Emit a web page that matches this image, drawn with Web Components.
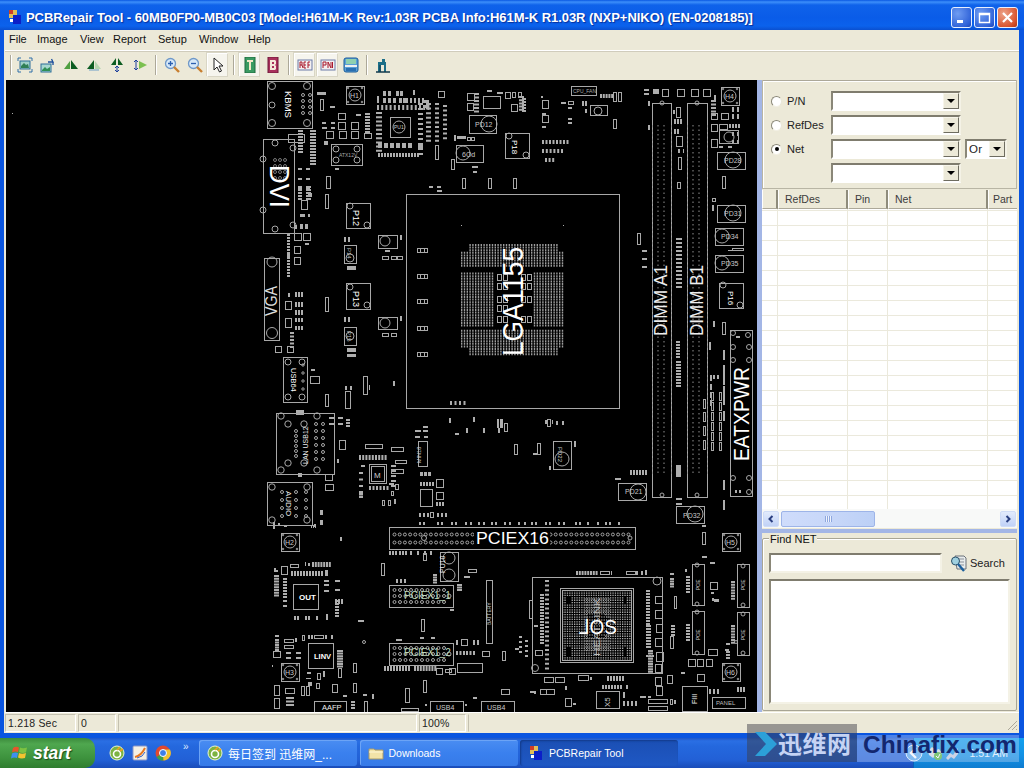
<!doctype html>
<html>
<head>
<meta charset="utf-8">
<title>PCBRepair Tool</title>
<style>
  html, body { margin: 0; height: 100%; overflow: hidden; background: #0a55e0; }
  body { width: 1024px; height: 768px; position: relative; font-family: "Liberation Sans", Arial, sans-serif; }
</style>
</head>
<body>
<xp-window>
  <title-bar slot="title">PCBRepair Tool - 60MB0FP0-MB0C03 [Model:H61M-K Rev:1.03R PCBA Info:H61M-K R1.03R (NXP+NIKO) (EN-0208185)]</title-bar>
  <menu-bar slot="menu"></menu-bar>
  <tool-bar slot="tools"></tool-bar>
  <pcb-view slot="view"></pcb-view>
  <side-panel slot="side"></side-panel>
  <status-strip slot="status"></status-strip>
</xp-window>
<task-bar></task-bar>
<china-mark></china-mark>

<script>
const BASE_FONT = '"Liberation Sans", "DejaVu Sans", Arial, sans-serif';

// small helper, every element is just css + markup in an open shadow root
function define(name, css, html) {
  customElements.define(name, class extends HTMLElement {
    constructor() {
      super();
      this.attachShadow({ mode: 'open' });
      const markup = typeof html === 'function' ? html(this) : html;
      this.shadowRoot.innerHTML = `<style>${css}</style>${markup}`;
    }
  });
}

define('xp-window', `
  :host { display: flex; flex-direction: column; height: 738px; box-sizing: border-box;
    background: #0a55e0; padding: 0 5px 5px 4px; }
  .title { display: block; margin: 0 -5px 0 -4px; }
  .body { background: #ece9d8; flex: 1; display: flex; flex-direction: column; min-height: 0; padding-left: 1px; }
  .main { display: flex; height: 632px; padding-left: 1px; }
  .split { width: 5px; background: #a3b6e6; }
`, `
  <div class="title"><slot name="title"></slot></div>
  <div class="body">
    <slot name="menu"></slot>
    <slot name="tools"></slot>
    <div class="main"><slot name="view"></slot><div class="split"></div><slot name="side"></slot></div>
    <slot name="status"></slot>
  </div>
`);

define('title-bar', `
  :host { display: flex; align-items: center; height: 30px; box-sizing: border-box; padding: 4px 6px 0 8px;
    background: linear-gradient(#0a58e2 0, #3d8ffa 2px, #0f62ea 5px, #0a5ce8 18px, #0b62ec 26px, #0a50d0 30px);
    color: #fff; font: bold 13px ${BASE_FONT}; text-shadow: 1px 1px 1px #08309a; }
  .ico { width: 14px; height: 14px; margin-right: 4px; flex: none; }
  .txt { flex: 1; white-space: nowrap; letter-spacing: -.05px; }
  .btns { display: flex; gap: 2px; }
  .b { width: 21px; height: 21px; box-sizing: border-box; border: 1px solid #e8f0ff; border-radius: 3px;
    background: radial-gradient(circle at 30% 30%, #6f9cf2, #2f62d8 75%, #1c46b8); display: flex; align-items: center; justify-content: center; }
  .b.x { background: radial-gradient(circle at 30% 30%, #eda48a, #d9552f 70%, #b03310); }
`, `
  <svg class="ico" viewBox="0 0 14 14"><rect x="1" y="0" width="8" height="8" fill="#e2bd57"/><rect x="1" y="0" width="4" height="4" fill="#cf3c28"/><rect x="5" y="5" width="8" height="9" fill="#0b1fc8"/><rect x="2" y="9" width="3" height="3" fill="#fff"/></svg>
  <div class="txt"><slot></slot></div>
  <div class="btns">
    <div class="b"><svg width="13" height="13" viewBox="0 0 13 13"><rect x="2" y="9" width="6" height="3" fill="#fff"/></svg></div>
    <div class="b"><svg width="13" height="13" viewBox="0 0 13 13"><path d="M1.5 2.5h10v9h-10z M1.5 3.5h10" fill="none" stroke="#fff" stroke-width="1.4"/></svg></div>
    <div class="b x"><svg width="13" height="13" viewBox="0 0 13 13"><path d="M2 2l9 9M11 2l-9 9" stroke="#fff" stroke-width="2.2"/></svg></div>
  </div>
`);

define('menu-bar', `
  :host { display: flex; height: 21px; align-items: center; box-sizing: border-box; padding: 0 0 2px 4px;
    color: #111; font: 11px ${BASE_FONT}; border-bottom: 1px solid #fff; }
  span { white-space: nowrap; }
`, [['File', 28], ['Image', 43], ['View', 33], ['Report', 45], ['Setup', 41], ['Window', 49], ['Help', 30]]
  .map(m => `<span style="width:${m[1]}px">${m[0]}</span>`).join(''));

const ICONS = {
  fit: '<rect x="3" y="4" width="10" height="8" fill="#9fd0c8" stroke="#2d6f98"/><path d="M4 9l3-3 2 2 2-1 1 4H4z" fill="#2f7f55"/><path d="M1 4V1h3M12 1h3v3M15 12v3h-3M4 15H1v-3" fill="none" stroke="#2f6fa8"/>',
  rot: '<rect x="1" y="7" width="10" height="8" fill="#a8d8d0" stroke="#2d6f98"/><path d="M2 13l3-3 2 2 3-2v4H2z" fill="#2f8f55"/><path d="M8 5h5l-1.5-3M13 5v3" fill="none" stroke="#1c4f9c" stroke-width="1.3"/>',
  mL: '<path d="M1 12l6-8v8z" fill="#4f9f40"/><path d="M8 12V3l7 9z" fill="#0d5d22"/>',
  mR: '<path d="M1 12l7-9v9z" fill="#0d5d22"/><path d="M9 12V4l6 8z" fill="#b7d6b0"/><path d="M3 13h10" stroke="#6fa0c8"/>',
  mV: '<path d="M2 8l5-7v7zM9 8V1l5 7z" fill="#0d5d22"/><path d="M8 9v6M6 11l2-2 2 2M6 13l2 2 2-2" fill="none" stroke="#1c3f9c"/>',
  mH: '<path d="M7 4l8 4-8 4z" fill="#7cc050"/><path d="M4 3v10M2 5l2-2 2 2M2 11l2 2 2-2" fill="none" stroke="#1c3f9c"/>',
  zin: '<circle cx="6.5" cy="6.5" r="5" fill="#d6e8f8" stroke="#6f98c8" stroke-width="1.3"/><path d="M4 6.5h5M6.5 4v5" stroke="#2b5fb0" stroke-width="1.3"/><path d="M10 10l5 5" stroke="#c87f30" stroke-width="2.4"/>',
  zout: '<circle cx="6.5" cy="6.5" r="5" fill="#d6e8f8" stroke="#6f98c8" stroke-width="1.3"/><path d="M4 6.5h5" stroke="#2b5fb0" stroke-width="1.3"/><path d="M10 10l5 5" stroke="#c87f30" stroke-width="2.4"/>',
  arrow: '<path d="M4 1v12l3-3 2.5 5 2-1-2.5-5h4z" fill="#fff" stroke="#222"/>',
  top: '<rect x="3" y="0" width="10" height="16" fill="#3a9a62" stroke="#1e6a3e"/><path d="M5 3h6v2H9v8H7V5H5z" fill="#f4e8c8"/>',
  bot: '<rect x="3" y="0" width="10" height="16" fill="#a8305c" stroke="#6e1838"/><path d="M5 3h5l1 1v3l-1 1 1 1v3l-1 1H5zM7 5v2h2V5zM7 9v2h2V9z" fill="#f4e8d8" fill-rule="evenodd"/>',
  ref: '<rect x="1" y="3" width="14" height="10" fill="#f4f0f0" stroke="#6c7ca8"/><path d="M3 5v6M3 5h2v3H3M5 8l1 3M7 5v6M7 5h2M7 8h2M7 11h2M11 5v6M11 5h2M11 8h2" fill="none" stroke="#a8182c"/>',
  pn: '<rect x="1" y="3" width="14" height="10" fill="#f4f0f0" stroke="#6c7ca8"/><path d="M3 11V5h3v3H3M8 11V5l3 6V5M12.5 11V5" fill="none" stroke="#a8182c"/>',
  disk: '<rect x="1" y="1" width="14" height="14" rx="2" fill="#5a9fd8" stroke="#1c5c98"/><rect x="3" y="2" width="10" height="5" fill="#8fd0b0"/><rect x="2" y="8" width="12" height="2" fill="#f0f0f0"/><rect x="3" y="11" width="10" height="3" fill="#2a6fb0"/>',
  house: '<path d="M3 15V5h4V2h3v3h1v10H9V8H6v7z" fill="#1c6f88"/><path d="M1 15h14" stroke="#12384c" stroke-width="1.5"/><path d="M5 8v7" stroke="#12384c"/>'
};

define('tool-button', `
  :host { display: block; }
  div { width: 21px; height: 24px; box-sizing: border-box; display: flex; align-items: center; justify-content: center; border: 1px solid transparent; }
  :host([down]) div { background: #f6f5ee; border-color: #fff #d9d6c5 #d9d6c5 #fff; box-shadow: -1px -1px 0 #d9d6c5; }
  svg { width: 16px; height: 16px; }
`, el => `<div><svg viewBox="0 0 16 16">${ICONS[el.getAttribute('icon')]}</svg></div>`);

define('tool-bar', `
  :host { display: flex; align-items: center; height: 29px; box-sizing: border-box; padding: 0 0 2px 5px; gap: 2px; border-top: 1px solid #d0ccbc; }
  i { width: 1px; height: 20px; background: #aca899; border-right: 1px solid #fff; margin: 0 2.5px; flex: none; }
  i.first { margin: 0; }
`, `
  <i class="first"></i>
  <tool-button icon="fit"></tool-button><tool-button icon="rot"></tool-button><tool-button icon="mL"></tool-button><tool-button icon="mR"></tool-button><tool-button icon="mV"></tool-button><tool-button icon="mH"></tool-button>
  <i></i>
  <tool-button icon="zin"></tool-button><tool-button icon="zout"></tool-button><tool-button icon="arrow" down></tool-button>
  <i></i>
  <tool-button icon="top" down></tool-button><tool-button icon="bot"></tool-button>
  <i></i>
  <tool-button icon="ref" down></tool-button><tool-button icon="pn" down></tool-button><tool-button icon="disk"></tool-button>
  <i></i>
  <tool-button icon="house"></tool-button>
`);

// ---- board drawing, coordinates are the ones seen on screen
function drawBoard() {
  const out = [];
  const G = '#a8a8a8';
  let pads = '';
  const r = (x, y, w, h, s = G) => out.push(`<rect x="${x}.5" y="${y}.5" width="${w}" height="${h}" fill="none" stroke="${s}"/>`);
  const f = (x, y, w, h) => { pads += `M${x} ${y}h${w}v${h}h${-w}z`; };
  const c = (x, y, rad, s = G) => out.push(`<circle cx="${x}" cy="${y}" r="${rad}" fill="none" stroke="${s}"/>`);
  const row = (x, y, n, w, h, dx) => { for (let i = 0; i < n; i++) f(x + i * dx, y, w, h); };
  const col = (x, y, n, w, h, dy) => { for (let i = 0; i < n; i++) f(x, y + i * dy, w, h); };
  const t = (s, x, y, size, rot = 0, fill = '#f4f4f4', len = 0, weight = 'normal') => out.push(
    `<text transform="translate(${x} ${y}) rotate(${rot})" font-size="${size}" fill="${fill}" font-weight="${weight}"${len ? ` textLength="${len}" lengthAdjust="spacingAndGlyphs"` : ''}>${s}</text>`);
  const box4 = (x, y, w, h, rad = 3) => { r(x, y, w, h); c(x + 5, y + 5, rad); c(x + w - 5, y + 5, rad); c(x + 5, y + h - 5, rad); c(x + w - 5, y + h - 5, rad); };
  const pd = (x, y, w, h, cx, cy, rad, label, lx, ly, rot = 0) => { r(x, y, w, h); c(cx, cy, rad); t(label, lx, ly, 7, rot, '#c8c8c8'); };
  const hole = (x, y, label) => { r(x, y, 18, 18); c(x + 9, y + 9, 6); [[2,2],[16,2],[2,16],[16,16]].forEach(p => c(x + p[0], y + p[1], .8)); t(label, x + 4, y + 12, 7, 0, '#c8c8c8'); };

  f(12, 113, 1, 1);

  // rear connectors
  box4(267, 81, 45, 47, 3.5); c(272, 105, 3);
  [95, 101, 107, 113].forEach(y => { c(303, y, 1.5); c(310, y, 1.5); });
  t('KBMS', 285, 91, 9.5, 90, '#fff');
  r(263, 139, 31, 94);
  [[275,143],[263,159],[263,210],[275,229],[293,148],[293,225]].forEach(p => c(p[0], p[1], 3));
  for (let i = 0; i < 4; i++) for (let j = 0; j < 3; j++) c(275 + j * 5, 160 + i * 6, 1.5, '#777');
  t('DVI', 270, 165, 27, 90, '#fff', 43);
  r(264, 258, 15, 82); c(272, 333, 5.5); c(272, 262, 5);
  t('VGA', 277, 316, 16, -90, '#ddd', 30);
  box4(283, 357, 24, 45, 3); [365, 373, 381, 389].forEach(y => { c(303, y, 1.2); });
  t('USB64', 291, 368, 7.5, 90, '#fff');
  r(276, 413, 58, 61);
  [[281,416],[317,416],[281,470],[317,470],[288,424],[304,424],[288,463],[304,463]].forEach(p => c(p[0], p[1], 3.2));
  for (let i = 0; i < 6; i++) { c(316, 424 + i * 7, 1.5); c(323, 424 + i * 7, 1.5); c(296, 431 + i * 5, 1.5); }
  t('LAN USB12', 308, 464, 7, -90, '#e8e8e8');
  f(296, 410, 8, 5); f(298, 473, 4, 4);
  box4(267, 482, 45, 43, 3.2);
  [492, 500, 508, 516].forEach(y => { c(282, y, 1.5); c(296, y, 1.5); c(306, y, 1.5); });
  t('AUDIO', 286, 491, 8, 90, '#eee');
  hole(281, 533, 'H2'); hole(281, 663, 'H3'); hole(346, 86, 'H1'); hole(721, 87, 'H4'); hole(722, 533, 'H5'); hole(722, 663, 'H6');

  // pads left of the socket
  col(298, 130, 8, 5, 2, 3); col(310, 130, 12, 6, 2, 3);
  [168, 178, 187].forEach(y => { f(298, y, 4, 2); f(306, y, 4, 2); });
  col(298, 186, 5, 4, 2, 3); col(306, 186, 5, 5, 2, 3);
  r(288, 134, 16, 8); f(308, 193, 4, 4);
  r(301, 200, 6, 9); f(300, 214, 5, 3); f(308, 214, 2, 3); f(295, 225, 2, 4); f(300, 224, 3, 5); f(305, 224, 3, 5);
  r(294, 233, 7, 7); r(303, 233, 7, 7); r(294, 246, 6, 7); r(294, 257, 6, 7);
  col(287, 234, 8, 3, 2, 3); col(287, 254, 8, 3, 2, 3); f(305, 243, 4, 2);
  r(326, 176, 4, 12);
  r(325, 297, 3, 14); r(325, 194, 3, 14);
  f(317, 92, 9, 3); r(320, 99, 3, 11); f(330, 106, 5, 2); f(324, 141, 4, 4);
  f(322, 122, 4, 2); f(331, 122, 4, 2); f(322, 127, 5, 2); f(331, 127, 4, 2);
  r(338, 113, 7, 6); r(338, 122, 7, 7); r(326, 131, 7, 7); r(339, 131, 7, 7); r(351, 131, 7, 7); r(351, 122, 7, 7); r(364, 133, 7, 5);
  col(365, 113, 7, 5, 2, 3); f(356, 114, 5, 2);
  box4(331, 144, 31, 21, 3); t('ATX12V', 339, 157, 5, 0, '#aaa'); f(335, 168, 4, 2);
  f(344, 237, 2, 5); f(348, 237, 2, 5);
  r(378, 235, 19, 13); c(385, 241, 5); f(400, 235, 2, 5); f(385, 250, 5, 2); r(382, 256, 6, 3); r(391, 256, 5, 3); r(397, 256, 5, 3);
  r(344, 245, 12, 18); c(350, 258, 4); t('P14', 347, 248, 6, 90, '#ccc');
  row(347, 266, 3, 3, 4, 3);
  r(346, 203, 24, 25); c(350, 206, 3); c(367, 225, 3); t('P12', 353, 210, 9, 90, '#fff');
  r(346, 283, 24, 26); c(350, 287, 3); c(367, 305, 3); t('P13', 353, 291, 9, 90, '#fff');
  r(378, 317, 19, 12); c(385, 323, 5); f(400, 316, 2, 5); r(382, 333, 6, 3); r(391, 333, 5, 3);
  f(344, 317, 2, 5); f(348, 317, 2, 5);
  r(344, 327, 12, 18); c(350, 336, 4); t('P15', 347, 331, 6, 90, '#ccc');
  row(347, 348, 3, 3, 4, 3); row(347, 354, 3, 3, 3, 3);
  [248, 274, 299, 326, 352].forEach(y => { r(417, y, 10, 4); f(420, y, 1, 5); f(424, y, 1, 5); });

  // VR block around PU1
  r(390, 117, 20, 20); c(399, 127, 6); t('PU1', 394, 129, 5, 0, '#ccc');
  row(383, 91, 2, 3, 5, 5); row(396, 91, 2, 3, 5, 4); f(413, 90, 2, 5);
  row(383, 98, 3, 3, 5, 5); row(399, 98, 2, 3, 5, 4); row(406, 98, 5, 2, 5, 4); f(377, 96, 2, 7);
  row(377, 105, 13, 2, 5, 4.2); f(423, 100, 6, 3); f(423, 105, 5, 3);
  col(376, 112, 10, 6, 2, 4.2); col(418, 103, 11, 5, 2, 5); col(426, 103, 9, 5, 2, 4.6); col(435, 103, 9, 4, 2, 4.6); col(443, 105, 8, 4, 2, 4.6);
  row(378, 143, 6, 4, 5, 6); f(418, 145, 5, 4);
  row(378, 153, 14, 2, 4, 3);
  r(435, 145, 3, 14); r(451, 159, 3, 10); f(454, 135, 2, 6);
  r(438, 91, 6, 6); r(467, 93, 7, 7); r(467, 103, 6, 7); col(474, 93, 6, 5, 2, 3.5);
  r(483, 96, 17, 12); f(487, 90, 5, 2); f(497, 92, 6, 2); r(505, 92, 5, 6);
  pd(469, 115, 27, 18, 489, 124, 8, 'PD12', 475, 127);
  f(457, 136, 9, 3); r(467, 137, 3, 3); r(471, 137, 3, 3);
  pd(456, 145, 27, 17, 463, 153, 7, '6Od', 462, 157);
  f(472, 166, 6, 2); f(473, 171, 4, 2);
  r(462, 178, 3, 10); r(488, 178, 3, 10); f(429, 186, 4, 2); f(437, 186, 4, 2); f(437, 190, 5, 2);

  // top centre
  r(571, 86, 25, 9); t('CPU_FAN', 573, 93, 5, 0, '#aaa');
  row(600, 94, 5, 2, 4, 2.8); r(613, 92, 3, 9); r(618, 92, 3, 9);
  r(512, 92, 3, 5); r(518, 92, 3, 5); col(519, 96, 5, 5, 2, 3.2); r(511, 104, 6, 7); col(522, 98, 5, 4, 2, 3);
  f(541, 96, 2, 2); r(542, 100, 6, 8); f(542, 113, 4, 2); r(542, 115, 6, 7); f(542, 126, 4, 2);
  f(561, 102, 5, 2); r(568, 101, 5, 3); f(568, 107, 4, 2); f(582, 101, 2, 5); f(585, 101, 2, 5); f(585, 109, 2, 4);
  r(590, 105, 17, 10); c(598, 111, 4); f(568, 118, 4, 2); f(568, 122, 4, 2);
  r(613, 119, 3, 9);
  r(505, 133, 24, 25); c(509, 136, 3); c(526, 155, 3); t('P18', 512, 140, 8, 90, '#fff');
  row(542, 140, 8, 2, 4, 3.5); row(542, 149, 6, 2, 4, 3.8); row(545, 158, 3, 2, 4, 3.6);
  r(513, 178, 3, 10);
  r(637, 233, 3, 11); col(642, 250, 3, 5, 2, 8);

  // socket
  r(406, 194, 213, 214);
  f(461, 225, 1, 1); f(563, 225, 1, 1);
  let lga = '';
  for (let x = 461; x < 564; x += 2.8) for (let y = 244; y < 354; y += 2.6) {
    const inHole = x > 492 && x < 533 && y > 270 && y < 327;
    const gap = (y > 266 && y < 271) || (y > 325 && y < 329);
    const corner = (x < 467 && (y < 250 || y > 346)) || (x > 558 && (y < 250 || y > 346));
    if (!inHole && !gap && !corner) lga += `M${x.toFixed(1)} ${y.toFixed(1)}h1.4v2h-1.4z`;
  }
  out.push(`<path d="${lga}" fill="#9c9c9c"/>`);
  [[497,274],[503,274],[497,283],[503,283],[521,274],[527,274],[521,283],[527,283],[497,296],[503,296],[497,305],[503,305],[497,316],[503,316],[521,296],[527,296],[521,316],[527,316]].forEach(p => r(p[0], p[1], 4, 6));
  row(450, 401, 4, 2, 4, 4.5);
  t('LGA1155', 523, 356, 29, -90, '#fff', 109);

  // memory slots
  [[652, 19, 658, 664], [687, 20, 693, 699]].forEach(m => {
    r(m[0], 103, m[1], 394);
    c(m[0] + 10, 103, 2); c(m[0] + 10, 495, 2);
    let d = '';
    for (let y = 125; y < 472; y += 4.5) d += `M${m[2]} ${y}v1.5M${m[3]} ${y}v1.5M${m[0] + .5} ${y}v2.5M${m[0] + m[1] + .5} ${y}v2.5`;
    out.push(`<path d="${d}" stroke="#909090" fill="none"/>`);
  });
  t('DIMM A1', 667, 336, 18, -90, '#eee', 71);
  t('DIMM B1', 703, 336, 18, -90, '#eee', 71);
  f(644, 89, 5, 2); f(644, 93, 5, 2); f(653, 89, 6, 5); r(662, 89, 6, 7); r(677, 89, 7, 7); r(691, 89, 7, 7); r(703, 89, 7, 7); f(714, 95, 2, 5);
  f(648, 101, 2, 5); f(648, 125, 2, 5);
  r(676, 107, 4, 10); f(673, 110, 2, 4); row(674, 119, 3, 2, 5, 3); row(674, 129, 2, 2, 5, 3);
  r(676, 136, 6, 10); f(678, 149, 2, 4); f(683, 149, 1, 4); r(678, 157, 3, 12);
  r(677, 182, 3, 6);
  col(676, 238, 13, 6, 2, 4);
  col(711, 100, 5, 5, 2, 3.5); r(711, 113, 6, 6); r(721, 113, 7, 6); f(732, 107, 2, 5); f(737, 107, 2, 5); f(732, 114, 2, 5); f(737, 114, 2, 5);
  r(711, 124, 6, 7); r(719, 124, 8, 5); row(729, 124, 4, 2, 4, 3);
  r(719, 130, 19, 13); c(729, 137, 5); r(711, 139, 6, 8);
  f(732, 132, 2, 4); f(737, 132, 2, 4); f(732, 140, 2, 4); f(737, 140, 2, 4);
  row(719, 146, 2, 4, 2, 9);
  pd(717, 152, 28, 17, 733, 160, 8, 'PD28', 724, 163);
  r(722, 176, 3, 12); r(712, 198, 3, 3); f(712, 205, 2, 6);
  pd(717, 205, 28, 17, 733, 213, 8, 'PD31', 724, 216);
  pd(715, 228, 28, 17, 722, 236, 7, 'PD34', 721, 239);
  r(732, 248, 11, 2); f(728, 250, 5, 1);
  pd(715, 255, 28, 17, 722, 263, 7, 'PD35', 721, 266);
  r(719, 283, 24, 25); c(723, 285, 3); c(740, 305, 3); t('P16', 728, 291, 8, 90, '#fff');
  r(722, 322, 3, 12); f(713, 321, 2, 6); f(709, 342, 2, 8);
  col(676, 341, 6, 4, 2, 3); col(676, 361, 9, 5, 2, 3);
  [[710,375],[710,384],[710,392],[710,400]].forEach(p => { f(p[0], p[1], 2, 6); });
  [[723,350],[723,365],[723,375],[723,386],[723,395],[723,411],[723,480],[723,500]].forEach(p => f(p[0], p[1], 2, 10));
  for (let y = 392; y < 445; y += 10) { r(711, y, 2, 8); r(719, y, 2, 8); }
  [401, 414, 428, 442].forEach(y => { r(703, y - 2, 2, 9); });
  f(713, 375, 2, 4); f(717, 375, 2, 4);
  row(630, 470, 6, 2, 5, 3); f(615, 478, 6, 2);
  f(676, 465, 5, 12); f(676, 498, 6, 2); f(676, 503, 6, 2);

  r(730, 330, 22, 166);
  [[733,333],[748,335],[733,347],[749,347],[733,360],[749,360],[733,478],[749,478],[749,492]].forEach(p => c(p[0], p[1], 2.5));
  row(735, 490, 2, 2, 3, 4); f(736, 336, 4, 2);
  t('EATXPWR', 749, 461, 22, -90, '#fff', 94);

  // chips under the socket
  r(553, 441, 18, 28); c(562, 459, 7); t('PD22', 558, 447, 6, 90, '#ccc');
  f(574, 441, 2, 6); f(549, 466, 2, 4);
  pd(618, 483, 28, 17, 638, 492, 8, 'PD21', 625, 494);
  pd(676, 506, 28, 17, 695, 514, 8, 'PD32', 683, 518);
  r(514, 444, 3, 10); r(537, 443, 3, 11); f(545, 420, 2, 4); r(547, 419, 3, 7); f(552, 420, 1, 4); f(556, 421, 2, 4); f(562, 421, 2, 4);
  f(533, 453, 4, 2); r(504, 423, 3, 8);
  f(449, 418, 2, 5); f(473, 417, 2, 5); f(466, 428, 2, 5); f(483, 428, 2, 5); f(498, 428, 2, 5);
  f(497, 419, 2, 9); f(500, 419, 3, 9);
  f(455, 433, 4, 2); f(423, 430, 5, 2); f(423, 426, 5, 2); f(415, 430, 6, 2); f(415, 436, 5, 2); f(424, 436, 4, 2);
  r(418, 441, 9, 25); t('MIN18', 421, 463, 5.5, -90, '#ccc');
  row(420, 472, 3, 3, 4, 4); row(420, 482, 5, 2, 4, 3); r(436, 479, 7, 8);
  r(420, 489, 12, 17); r(436, 492, 7, 7); row(436, 502, 3, 2, 4, 3);
  r(365, 444, 17, 4); r(391, 447, 12, 4); r(395, 460, 11, 3); r(391, 469, 12, 4);
  row(359, 455, 9, 2, 5, 3.2);
  r(369, 464, 17, 19); r(371, 466, 13, 15); t('M', 374, 478, 8, 0, '#ccc');
  f(361, 465, 4, 2); col(359, 472, 4, 4, 2, 6.5);
  col(359, 491, 3, 4, 2, 2.5); row(369, 486, 6, 2, 4, 3.5); f(389, 483, 5, 2);
  col(391, 465, 5, 5, 2, 5); r(395, 484, 3, 5); r(391, 491, 2, 4); r(382, 500, 2, 5); r(388, 500, 2, 5); r(394, 499, 1, 4);
  r(339, 440, 6, 9); f(337, 459, 2, 4); r(325, 474, 7, 6); r(325, 484, 8, 6);
  f(338, 417, 5, 2); f(338, 423, 5, 2); col(346, 419, 3, 4, 2, 3);
  f(329, 417, 6, 2); f(329, 423, 6, 2);
  f(311, 369, 4, 2); r(310, 376, 9, 7); r(325, 394, 3, 12);
  f(345, 386, 2, 4); f(350, 386, 2, 4); r(345, 391, 5, 17);
  r(363, 376, 4, 18); f(369, 385, 1, 5); f(393, 381, 2, 5);
  f(288, 293, 2, 4); row(295, 292, 3, 2, 5, 3); row(295, 302, 3, 2, 5, 3); row(295, 310, 3, 2, 5, 3); row(295, 318, 3, 2, 4, 3);
  r(285, 301, 6, 8); r(285, 318, 6, 9); row(295, 326, 3, 2, 4, 3);
  col(290, 332, 5, 4, 2, 3.5); r(275, 346, 6, 6); r(287, 346, 6, 6);

  // PCIE x16
  r(389, 527, 246, 22);
  let pcie = '';
  for (let x = 393; x < 630; x += 5.2) { pcie += `M${x.toFixed(1)} 534.5a1.5 1.5 0 1 0 3 0a1.5 1.5 0 1 0 -3 0M${x.toFixed(1)} 542.5a1.5 1.5 0 1 0 3 0a1.5 1.5 0 1 0 -3 0`; }
  out.push(`<path d="${pcie}" fill="#000" stroke="${G}"/>`);
  out.push(`<rect x="474" y="528" width="76" height="20" fill="#000"/>`);
  t('PCIEX16', 476, 544, 17, 0, '#fff', 73);
  c(424, 538, 2.5); c(630, 538, 2);
  for (const x of [419, 423, 437, 441, 451, 455, 465, 470, 478, 483, 491, 495, 504, 509, 518, 524, 531, 535, 545, 549, 558, 563, 575, 579, 587, 597, 605, 609, 618]) f(x, 522, 2, 3);
  row(419, 513, 3, 2, 4, 4); r(430, 512, 3, 5); row(437, 513, 3, 2, 4, 4);
  row(389, 551, 3, 2, 4, 3); row(399, 551, 3, 2, 4, 3); f(410, 551, 2, 4); f(417, 551, 2, 4); f(424, 551, 2, 4); r(423, 553, 3, 7); f(430, 551, 2, 4);
  r(440, 552, 18, 29); c(449, 558, 6); c(449, 575, 6); t('PU10', 445, 573, 7, -90, '#eee');
  r(468, 569, 8, 3); f(464, 576, 6, 2);
  r(381, 563, 3, 12);

  // PCIE x1
  [[585, 'PCIEX1_1', 599], [643, 'PCIEX1_2', 656]].forEach(s => {
    r(389, s[0], 64, 22);
    let d = '';
    for (let x = 393; x < 446; x += 5.5) [5, 11, 17].forEach(o => { d += `M${x} ${s[0] + o}a1.5 1.5 0 1 0 3 0a1.5 1.5 0 1 0 -3 0`; });
    out.push(`<path d="${d}" fill="none" stroke="${G}"/>`);
    c(449, s[0] + 11, 2);
    t(s[1], 404, s[2], 10, 0, '#bcd8bc');
  });
  row(396, 579, 3, 2, 4, 4); col(433, 574, 4, 4, 2, 2.5); col(457, 584, 3, 5, 2, 2.5); f(450, 609, 4, 2);
  f(396, 639, 6, 2); f(420, 637, 4, 2); f(431, 637, 4, 2);
  r(421, 619, 3, 12); r(423, 680, 3, 12);
  row(384, 666, 9, 2, 5, 3); row(414, 666, 8, 2, 5, 2.9);
  f(360, 620, 4, 2);
  c(364, 642, 1.5);
  r(461, 639, 6, 6); f(456, 640, 2, 5); f(473, 640, 2, 5); f(477, 640, 2, 5);
  row(456, 651, 3, 2, 4, 3.5); row(466, 651, 3, 2, 4, 3.5); r(482, 651, 7, 5);
  r(457, 663, 25, 9); r(502, 651, 3, 9);
  r(445, 669, 6, 3); r(436, 668, 6, 6); r(449, 668, 6, 6);
  r(501, 689, 8, 5); r(546, 689, 8, 5); f(473, 697, 4, 2);
  r(405, 688, 4, 14);
  r(401, 708, 17, 3);
  f(425, 704, 2, 2); f(465, 704, 2, 2);

  // long parts
  r(486, 580, 6, 63); t('BATTERY', 491, 625, 5, -90, '#d8d8d8');
  r(430, 701, 33, 11); t('USB4', 436, 710, 7, 0, '#ccc');
  r(481, 701, 33, 11); t('USB4', 487, 710, 7, 0, '#ccc');
  r(314, 701, 32, 11); t('AAFP', 322, 710, 7.5, 0, '#eee');

  // audio corner
  f(273, 522, 2, 7); f(278, 523, 2, 3); f(284, 525, 3, 2); f(320, 510, 3, 5); f(320, 520, 3, 5);
  f(314, 524, 2, 3); row(311, 525, 3, 1, 3, 2);
  f(340, 537, 2, 4);
  r(290, 564, 8, 3); f(305, 562, 1, 4); f(308, 563, 2, 3); row(312, 562, 7, 2, 5, 2.8);
  row(291, 571, 11, 2, 5, 3); f(325, 570, 3, 6); r(281, 566, 6, 8); f(274, 568, 2, 2); f(274, 570, 4, 2);
  col(274, 575, 8, 5, 2, 2.8); col(283, 578, 7, 4, 2, 3);
  col(283, 600, 2, 4, 2, 5);
  col(324, 580, 2, 5, 2, 4); f(335, 580, 5, 2); f(335, 589, 5, 2); f(324, 590, 5, 2);
  row(335, 599, 3, 2, 5, 3); col(335, 600, 6, 4, 2, 3);
  row(294, 616, 2, 2, 4, 3); row(305, 616, 2, 2, 4, 3); f(316, 616, 2, 4); f(326, 614, 2, 6);
  r(293, 584, 25, 25); t('OUT', 299, 600, 8, 0, '#fff', 0, 'bold');
  f(358, 620, 5, 2);
  r(308, 643, 25, 25); t('LINV', 314, 659, 7.5, 0, '#fff', 0, 'bold');
  f(275, 635, 4, 2); col(275, 639, 5, 4, 2, 2.5); r(273, 651, 7, 6);
  r(284, 639, 9, 3); r(284, 645, 9, 3); f(286, 652, 5, 2); f(286, 657, 5, 2); f(296, 652, 5, 2); f(296, 657, 5, 2);
  r(302, 635, 2, 5); f(308, 635, 2, 4); f(311, 635, 2, 4); r(314, 635, 9, 3); f(325, 635, 2, 4); f(331, 635, 2, 4);
  f(295, 638, 2, 4);
  col(337, 650, 7, 6, 2, 2.6); r(338, 668, 3, 9);
  f(307, 672, 4, 2); f(306, 678, 5, 1); r(317, 673, 3, 6); f(323, 671, 2, 6); r(353, 663, 3, 9);
  f(308, 682, 4, 4); r(316, 683, 3, 5); r(332, 684, 5, 8);
  r(274, 685, 5, 10); r(274, 698, 5, 10); r(285, 688, 9, 5); col(286, 697, 3, 8, 2, 3.5);
  r(301, 686, 3, 9); r(306, 686, 3, 9); f(343, 695, 4, 2); f(363, 694, 4, 2); f(372, 694, 2, 5);
  r(353, 683, 3, 9); col(351, 701, 3, 4, 2, 3); r(364, 701, 3, 11);
  f(272, 665, 1, 2);

  // PCH
  r(532, 577, 130, 96); c(657, 581, 4); c(535, 668, 3.5);
  r(560, 588, 73, 74); r(562, 590, 69, 70);
  let pch = '';
  for (let x = 562; x < 631; x += 2.4) for (let y = 590; y < 660; y += 2.4) {
    const dx = Math.abs(x - 596), dy = Math.abs(y - 625);
    const ring = dx > 30 || dy > 30;
    const keep = ring || (dx > 8 && dy < 22 && dy > 0 && (dx + dy) > 18) || (dx < 24 && dy > 12) || (dx > 12 && dx < 26);
    if (keep) pch += `M${x.toFixed(1)} ${y.toFixed(1)}h1.3v1.3h-1.3z`;
  }
  out.push(`<path d="${pch}" fill="#aaa"/>`);
  let pchc = '';
  for (let x = 585; x < 610; x += 2.4) pchc += `M${x.toFixed(1)} 598v54`;
  out.push(`<path d="${pchc}" stroke="#808080" stroke-dasharray="2 1" fill="none"/>`);
  t('HEATSINK', 600, 656, 9, -90, '#bcbcbc', 58);
  t('⅃OS', 579, 634, 21, 0, '#fff', 38);
  row(576, 571, 8, 2, 4, 2.8); r(600, 571, 9, 3); f(611, 571, 1, 4); r(626, 571, 9, 3); f(636, 571, 2, 4); f(641, 571, 2, 4); f(645, 570, 2, 5);
  col(545, 580, 20, 4, 2, 4.6); col(540, 594, 17, 4, 2, 3); r(535, 650, 7, 5);
  r(529, 600, 3, 18); f(534, 625, 4, 2);
  col(519, 636, 4, 3, 2, 5); col(525, 640, 4, 3, 2, 5); f(515, 648, 4, 2);
  r(544, 677, 9, 5); r(555, 677, 9, 5);
  r(578, 675, 10, 5); f(590, 677, 2, 3); row(607, 676, 6, 2, 5, 3); row(602, 685, 6, 2, 4, 3); f(620, 685, 2, 4); f(626, 685, 2, 4);
  r(565, 698, 6, 8); f(573, 703, 3, 2); r(540, 689, 6, 5); f(534, 691, 2, 3); f(565, 686, 2, 4);
  col(646, 590, 12, 4, 2, 3); r(655, 596, 7, 7); r(655, 610, 7, 8); r(656, 624, 6, 8); r(655, 638, 7, 8); r(656, 652, 7, 9);
  col(646, 625, 8, 5, 2, 3); row(646, 655, 3, 2, 2, 3); col(648, 650, 9, 5, 2, 2.6);
  r(655, 664, 6, 8); r(655, 677, 6, 8); r(667, 675, 5, 8); r(656, 686, 6, 9);
  f(670, 573, 4, 2); col(670, 578, 4, 4, 2, 2.5); r(674, 596, 2, 12);
  col(671, 625, 4, 4, 2, 3); r(670, 636, 3, 12);
  r(688, 659, 7, 7); r(697, 659, 6, 7); r(706, 659, 6, 7); r(697, 674, 7, 7); f(681, 672, 4, 2);
  f(685, 569, 2, 3); r(702, 532, 3, 12); f(702, 525, 4, 2); f(702, 556, 5, 2); f(710, 562, 5, 2);
  r(692, 564, 12, 41); c(697, 565, 2); c(697, 604, 2); t('PCIE', 700, 590, 4.5, -90, '#ccc');
  r(692, 611, 12, 43); c(697, 612, 2); c(697, 653, 2); t('PCIE', 700, 640, 4.5, -90, '#ccc');
  r(737, 564, 12, 43); c(743, 566, 2); c(743, 605, 2); t('PCIE', 745, 590, 4.5, -90, '#ccc');
  r(737, 612, 12, 43); c(743, 614, 2); c(743, 653, 2); t('PCIE', 745, 640, 4.5, -90, '#ccc');
  col(686, 576, 6, 4, 2, 3); col(686, 624, 6, 4, 2, 3); col(731, 581, 7, 4, 2, 2.8); col(731, 625, 7, 4, 2, 2.8);
  r(710, 582, 7, 7); f(711, 592, 3, 2); f(712, 598, 2, 3); f(714, 599, 5, 3);
  f(726, 643, 4, 2); f(725, 649, 4, 2); c(736, 642, 1.5); r(708, 649, 9, 6); col(726, 651, 3, 4, 2, 3);
  r(682, 686, 25, 25); t('FIII', 697, 704, 7, -90, '#eee'); row(709, 689, 3, 2, 5, 4); row(737, 687, 3, 2, 5, 3);
  r(712, 697, 33, 11); t('PANEL', 716, 705, 6, 0, '#bbb');
  r(596, 691, 23, 17); t('X5', 610, 707, 8, -90, '#ccc'); row(623, 701, 4, 2, 5, 4); f(623, 692, 2, 6);
  r(648, 699, 19, 4); r(648, 706, 19, 4); r(670, 699, 2, 5); f(674, 700, 2, 4); f(640, 696, 6, 2); f(648, 696, 3, 2);
  f(530, 691, 4, 2);

  return `<svg viewBox="6 80 751 632" width="751" height="632" font-family='${BASE_FONT}'>` +
    `<path d="${pads}" fill="#aeaeae"/>${out.join('')}</svg>`;
}

define('pcb-view', `
  :host { display: block; width: 751px; height: 632px; background: #000; overflow: hidden; flex: none; }
  svg { display: block; }
`, () => drawBoard());

define('xp-combo', `
  :host { display: block; box-sizing: border-box; height: 20px; background: #fff; position: relative;
    border: 2px solid; border-color: #7f7c6e #f4f2e6 #fff #8a8778; font: 11px ${BASE_FONT}; }
  .t { padding: 2px 0 0 2px; color: #222; font-size: 11.5px; letter-spacing: .3px; }
  .a { position: absolute; right: 0; top: 0; bottom: 0; width: 16px; background: #ece9d8; box-sizing: border-box;
    border: 1px solid; border-color: #f7f5ea #6e6c60 #6e6c60 #f7f5ea; display: flex; align-items: center; justify-content: center; }
  .a::after { content: ""; border: 4px solid transparent; border-top: 4px solid #000; border-bottom: 0; }
`, `<div class="t"><slot></slot></div><div class="a"></div>`);

define('pick-row', `
  :host { display: grid; grid-template-columns: 15px 46px 130px auto; align-items: center; height: 24px; font: 11px ${BASE_FONT}; color: #222; position: relative; }
  .r { width: 11px; height: 11px; border-radius: 50%; box-sizing: border-box; background: #fff; border: 1px solid #8a8778; border-right-color: #e8e6d8; border-bottom-color: #f2f0e4; position: relative; margin-left: 1px; }
  :host([on]) .r::after { content: ""; position: absolute; left: 2.5px; top: 2.5px; width: 4px; height: 4px; border-radius: 50%; background: #000; }
  .l { white-space: nowrap; padding-left: 2px; }
`, el => {
  const label = el.getAttribute('label');
  return `${label ? '<span class="r"></span>' : '<span></span>'}<span class="l">${label}</span><xp-combo></xp-combo><slot></slot>`;
});

define('net-grid', `
  :host { display: flex; flex-direction: column; height: 338px; background: #fff; margin-top: 1px; font: 10.5px ${BASE_FONT}; color: #3c3c3c; }
  .h, .b { display: grid; grid-template-columns: 16px 70px 40px 100px 1fr; }
  .h { height: 19px; flex: none; background: #ece9d8; }
  .h div { box-sizing: border-box; border-right: 2px solid #8f8c7c; border-left: 1px solid #fff; border-bottom: 1px solid #aca899; padding: 3px 0 0 6px; white-space: nowrap; overflow: hidden; }
  .h div:last-child { border-right: 0; padding-left: 4px; }
  .b { flex: 1; min-height: 0; background: linear-gradient(#fff 14px, #ebe9dc 14px) 0 2px / 100% 15px; }
  .b div { border-right: 1px solid #ebe9dc; }
  .sb { height: 19px; flex: none; display: flex; align-items: center; gap: 2px; background: #f8f9f8; padding: 0 1px; }
  .btn { width: 16px; height: 16px; box-sizing: border-box; border: 1px solid #cfdcf6; border-radius: 2px; background: linear-gradient(#e2ebfc, #c1d2f7); display: flex; align-items: center; justify-content: center; }
  .th { width: 94px; height: 16px; box-sizing: border-box; border: 1px solid #9db4e8; border-radius: 2px; background: linear-gradient(90deg, #cfdcfb, #c6d6f8 60%, #bcd0f6); display: flex; align-items: center; justify-content: center; }
  .th span { width: 7px; height: 6px; background: repeating-linear-gradient(90deg, #8ea7de 0 1px, #eef3fd 1px 2px); }
  .sp { flex: 1; }
`, `
  <div class="h"><div></div><div>RefDes</div><div>Pin</div><div>Net</div><div>Part</div></div>
  <div class="b"><div></div><div></div><div></div><div></div><div style="border:0"></div></div>
  <div class="sb">
    <div class="btn"><svg width="8" height="8" viewBox="0 0 8 8"><path d="M5.5 1L2.5 4l3 3" fill="none" stroke="#2a3f80" stroke-width="2"/></svg></div>
    <div class="th"><span></span></div><div class="sp"></div>
    <div class="btn"><svg width="8" height="8" viewBox="0 0 8 8"><path d="M2.5 1l3 3-3 3" fill="none" stroke="#2a3f80" stroke-width="2"/></svg></div>
  </div>
`);

define('find-net', `
  :host { display: block; box-sizing: border-box; position: relative; height: 173px; margin-top: 5px; border: 1px solid #a8a594; box-shadow: inset 1px 1px 0 #fff; border-radius: 2px; font: 11px ${BASE_FONT}; color: #111; }
  .leg { position: absolute; left: 6px; top: -6px; background: #ece9d8; padding: 0 1px; }
  .q { display: flex; align-items: center; margin: 13px 0 0 6px; height: 22px; }
  .in, .list { background: #fff; box-sizing: border-box; border: 2px solid; border-color: #7f7c6e #f4f2e6 #f4f2e6 #8a8778; }
  .in { width: 173px; height: 20px; }
  .s { display: flex; align-items: center; gap: 3px; margin-left: 8px; color: #222; }
  .list { width: 241px; height: 125px; margin: 5px 0 0 6px; }
`, `
  <div class="leg">Find NET</div>
  <div class="q"><div class="in"></div>
    <div class="s"><svg width="17" height="17" viewBox="0 0 17 17"><path d="M5 1h9l2 2v11H7z" fill="#e8ecec" stroke="#6a7078"/><path d="M8 4h6M9 7h5M10 10h4" stroke="#8b9098"/><circle cx="5.5" cy="6" r="4" fill="#9fd0e0" stroke="#2a5068"/><path d="M8 9l6 7" stroke="#1c5f9c" stroke-width="2.4"/></svg>Search</div>
  </div>
  <div class="list"></div>
`);

define('side-panel', `
  :host { display: flex; flex-direction: column; width: 257px; box-sizing: border-box; padding-right: 2px; flex: none; background: #ece9d8; }
  .top { box-sizing: border-box; height: 109px; border: 1px solid #b8b5a4; border-top-color: #aca899; box-shadow: inset 1px 1px 0 #fff; padding: 8px 0 0 7px; border-radius: 1px; }
  .or { display: block; width: 42px; margin-left: 4px; }
  .split { height: 4px; margin-top: 1px; background: #a3b6e6; flex: none; }
`, `
  <div class="top">
    <pick-row label="P/N"></pick-row>
    <pick-row label="RefDes"></pick-row>
    <pick-row label="Net" on><xp-combo class="or">Or</xp-combo></pick-row>
    <pick-row label=""></pick-row>
  </div>
  <net-grid></net-grid>
  <div class="split"></div>
  <find-net></find-net>
`);

define('status-strip', `
  :host { display: flex; height: 20px; box-sizing: border-box; gap: 2px; padding: 1px 0 0 0; font: 10.5px ${BASE_FONT}; color: #222; position: relative; border-top: 1px solid #fff; }
  div { box-sizing: border-box; border: 1px solid; border-color: #c4c1b0 #fff #fff #c4c1b0; padding: 2px 0 0 2px; white-space: nowrap; letter-spacing: .2px; }
  svg { position: absolute; right: 1px; bottom: 1px; }
`, `
  <div style="width:71px">1.218 Sec</div><div style="width:38px">0</div><div style="width:299px"></div><div style="width:47px">100%</div><div style="flex:1;border-color:transparent;border-left-color:#c4c1b0"></div>
  <svg width="12" height="12" viewBox="0 0 12 12"><path d="M11 2L2 11M11 6l-5 5M11 10l-1 1" stroke="#aca899" stroke-width="1"/></svg>
`);

const SWIRL = '<circle cx="8" cy="8" r="7" fill="#7cb342" stroke="#e8f4d0"/><circle cx="8" cy="9" r="3.5" fill="none" stroke="#fff" stroke-width="1.6"/><path d="M8 5l3-3M11 6l3-2" stroke="#f0a020" stroke-width="1.6"/>';
const TASK_ICONS = {
  swirl: SWIRL,
  folder: '<path d="M1 4h5l1 1h8v9H1z" fill="#f2e3a8" stroke="#a89a68"/><path d="M1 7h14" stroke="#fff8d8"/>',
  pcb: '<rect x="2" y="1" width="8" height="8" fill="#e2bd57"/><rect x="2" y="1" width="4" height="4" fill="#cf3c28"/><rect x="6" y="6" width="8" height="9" fill="#0b1fc8"/><rect x="3" y="10" width="3" height="3" fill="#fff"/>'
};

define('task-button', `
  :host { display: block; width: 158px; height: 26px; box-sizing: border-box; margin-top: 2px; border-radius: 3px; background: linear-gradient(#4a8df2, #3a80ee 50%, #367ae8); color: #fff; font: 10.5px "Liberation Sans", "Noto Sans CJK SC", sans-serif; box-shadow: inset 1px 1px 0 #6ca4f6; }
  :host([on]) { background: linear-gradient(#1b4fb4, #1f58c4); box-shadow: inset 1px 1px 2px #123a88; }
  div { display: flex; align-items: center; gap: 5px; height: 100%; padding-left: 8px; white-space: nowrap; }
  svg { flex: none; }
`, el => `<div><svg width="16" height="16" viewBox="0 0 16 16">${TASK_ICONS[el.getAttribute('icon')]}</svg><slot></slot></div>`);

define('task-bar', `
  :host { display: flex; position: absolute; left: 0; right: 0; bottom: 0; height: 30px; align-items: flex-start; box-sizing: border-box;
    background: linear-gradient(#1f56c8 0, #2a6fe4 3px, #2468de 8px, #2260d6 22px, #1a4cb8 30px); }
  .start { width: 95px; height: 30px; flex: none; box-sizing: border-box; padding-left: 11px; display: flex; align-items: center; gap: 4px; border-radius: 0 10px 10px 0;
    background: linear-gradient(#3c8a3c 0, #4fa74f 6px, #3d923d 20px, #2f7d2f 30px); color: #fff; font: italic bold 17.5px "Liberation Sans", sans-serif; text-shadow: 1px 1px 1px #1b4d1b; }
  .quick { display: flex; align-items: center; gap: 7px; height: 30px; margin-left: 14px; width: 90px; position: relative; }
  .more { position: absolute; left: 74px; top: 3px; color: #dfe9ff; font: 10px "Liberation Sans"; }
  .tasks { display: flex; gap: 2.5px; }
  .tray { position: absolute; right: 0; top: 0; bottom: 0; width: 111px; background: linear-gradient(#12a0ee, #1290e4 60%, #0e7cd0); border-left: 1px solid #0a5fb8; display: flex; align-items: center; box-sizing: border-box; color: #fff; font: 10.5px "Liberation Sans", sans-serif; }
  .tray svg:first-child { margin-left: -9px; margin-right: 4px; }
  .tray svg:nth-child(2) { margin-right: 1px; }
  .time { margin-left: auto; margin-right: 16px; opacity: .9; }
`, `
  <div class="start"><svg width="18" height="18" viewBox="0 0 18 18"><path d="M2 4q3-2 6-.5L7 8Q4 7 1 8.5z" fill="#e8552c"/><path d="M9 3.5q3 1.5 7 0l-1 5q-4 1-7-.5z" fill="#7cc242"/><path d="M1 9.5q3-1.5 6-.5l-1 5q-3-1-6 .5z" fill="#3f8ff0"/><path d="M8 9q3 1.5 7 0l-1 5q-4 1-7-.5z" fill="#f4c430"/></svg><span>start</span></div>
  <div class="quick">
    <svg width="16" height="16" viewBox="0 0 16 16">${SWIRL}</svg>
    <svg width="16" height="16" viewBox="0 0 16 16"><rect x="1" y="1" width="14" height="14" rx="1" fill="#f4f0e4" stroke="#8a98c8"/><path d="M3 12q6-1 10-9" stroke="#e87820" stroke-width="2" fill="none"/><path d="M5 13q6-1 8-6" stroke="#3060c8" fill="none"/></svg>
    <svg width="16" height="16" viewBox="0 0 16 16"><circle cx="8" cy="8" r="7.5" fill="#e0492f"/><path d="M8 8L1.5 12A7.5 7.5 0 0 0 9 15.5z" fill="#3ea04a"/><path d="M8 8l.5 7.5A7.5 7.5 0 0 0 15 4.5H8z" fill="#f2c230"/><circle cx="8" cy="8" r="3.5" fill="#3f7fe8" stroke="#fff"/></svg>
    <span class="more">»</span>
  </div>
  <div class="tasks">
    <task-button icon="swirl"><span style="font-size:12px">每日签到 迅维网_...</span></task-button>
    <task-button icon="folder">Downloads</task-button>
    <task-button icon="pcb" on>PCBRepair Tool</task-button>
  </div>
  <div class="tray">
    <svg width="18" height="18" viewBox="0 0 18 18"><circle cx="9" cy="9" r="8" fill="#5aa8ec" stroke="#dbeeff"/><path d="M11 4L6 9l5 5" fill="none" stroke="#fff" stroke-width="2.4"/></svg>
    <svg width="16" height="16" viewBox="0 0 16 16"><path d="M1 6l4-4 4 3 3-1 3 4-4 3-2-1-3 3-4-3z" fill="#d8dce4"/><circle cx="11" cy="11" r="4" fill="#56b83a"/><path d="M9 11l2 2 2-4" stroke="#fff" fill="none"/></svg>
    <svg width="16" height="16" viewBox="0 0 16 16"><path d="M2 13l4-5 3 2 5-7v6l-4 5-3-2-3 3z" fill="#c8ccdc"/></svg>
    <span class="time">1:51 AM</span>
  </div>
`);

// watermark sits on top of the window and the taskbar
define('china-mark', `
  :host { display: block; position: absolute; left: 747px; top: 724px; width: 273px; height: 41px; pointer-events: none; }
  .d { position: absolute; left: 0; top: 0; width: 110px; height: 38px; background: rgba(60, 60, 70, .48); }
  .l { position: absolute; left: 110px; top: 11px; width: 162px; height: 27px; background: rgba(220, 228, 248, .32); }
  svg { position: absolute; left: 7px; top: 8px; }
  .cn { position: absolute; left: 31px; top: 5px; font: bold 24px "Noto Sans CJK SC", sans-serif; line-height: 28px; color: #c5d3f4; white-space: nowrap; letter-spacing: .5px; }
  .en { position: absolute; left: 116px; top: 6px; font: bold 24.5px "Liberation Sans", sans-serif; line-height: 30px; color: #13276f; white-space: nowrap; }
`, `
  <div class="d"></div><div class="l"></div>
  <svg width="24" height="24" viewBox="0 0 24 24"><path d="M1 0h10l12 12-12 12H1l11-12z" fill="#2ca0d8"/></svg>
  <div class="cn">迅维网</div>
  <div class="en">Chinafix.com</div>
`);
</script>
</body>
</html>
